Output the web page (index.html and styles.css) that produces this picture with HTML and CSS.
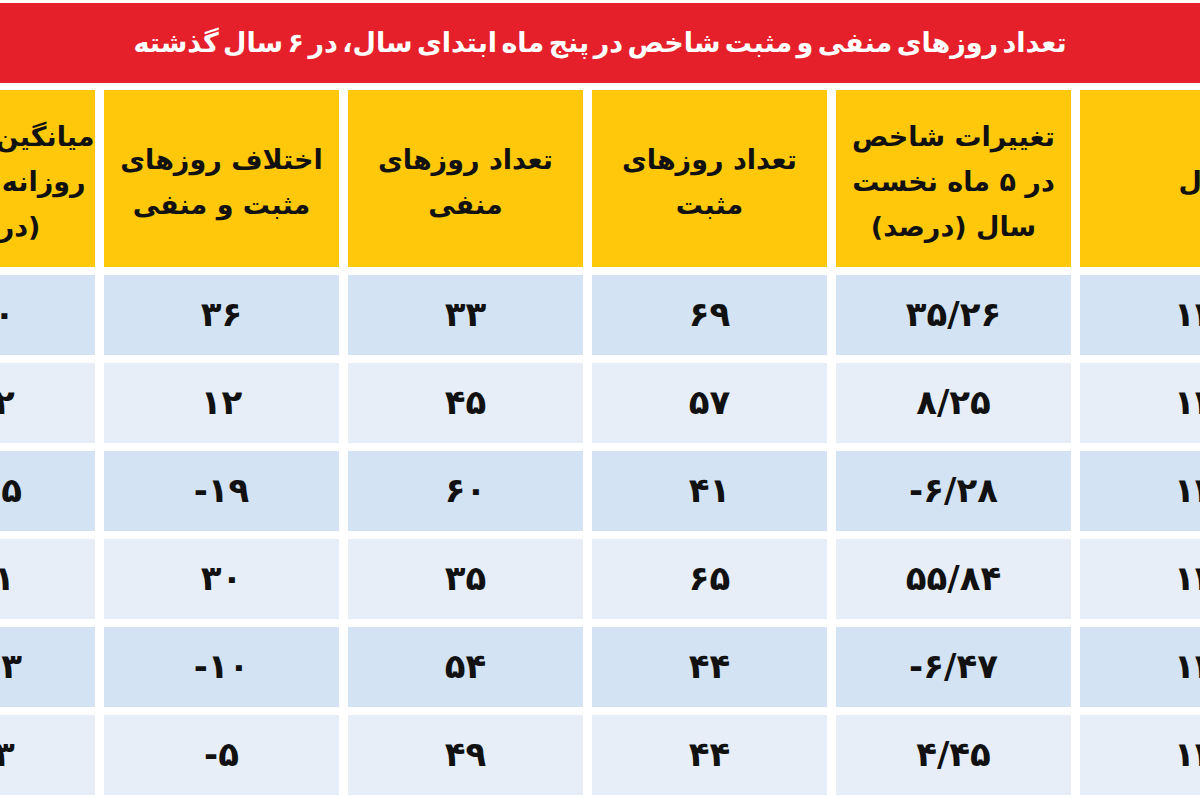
FILE: index.html
```html
<!DOCTYPE html>
<html lang="fa" dir="rtl">
<head>
<meta charset="utf-8">
<title>تعداد روزهای منفی و مثبت شاخص</title>
<link rel="stylesheet" href="styles.css">
</head>
<body>
<div class="page">
  <div class="title">تعداد روزهای منفی و مثبت شاخص در پنج ماه ابتدای سال، در ۶ سال گذشته</div>
  <div class="table">
    <div class="cell head yearhead">سال</div>
    <div class="cell head">تغییرات شاخص<br>در ۵ ماه نخست<br>سال (درصد)</div>
    <div class="cell head">تعداد روزهای<br>مثبت</div>
    <div class="cell head">تعداد روزهای<br>منفی</div>
    <div class="cell head">اختلاف روزهای<br>مثبت و منفی</div>
    <div class="cell head edge">میانگین بازدهی<br>روزانه شاخص<br>(درصد)</div>

    <div class="cell dark num year">۱۳۹۴</div>
    <div class="cell dark num">۳۵/۲۶</div>
    <div class="cell dark num">۶۹</div>
    <div class="cell dark num">۳۳</div>
    <div class="cell dark num">۳۶</div>
    <div class="cell dark num">۰/۳۰</div>

    <div class="cell light num year">۱۳۹۵</div>
    <div class="cell light num">۸/۲۵</div>
    <div class="cell light num">۵۷</div>
    <div class="cell light num">۴۵</div>
    <div class="cell light num">۱۲</div>
    <div class="cell light num">۰/۰۲</div>

    <div class="cell dark num year">۱۳۹۶</div>
    <div class="cell dark num">-۶/۲۸</div>
    <div class="cell dark num">۴۱</div>
    <div class="cell dark num">۶۰</div>
    <div class="cell dark num">-۱۹</div>
    <div class="cell dark num">-۰/۰۵</div>

    <div class="cell light num year">۱۳۹۷</div>
    <div class="cell light num">۵۵/۸۴</div>
    <div class="cell light num">۶۵</div>
    <div class="cell light num">۳۵</div>
    <div class="cell light num">۳۰</div>
    <div class="cell light num">۰/۴۱</div>

    <div class="cell dark num year">۱۳۹۸</div>
    <div class="cell dark num">-۶/۴۷</div>
    <div class="cell dark num">۴۴</div>
    <div class="cell dark num">۵۴</div>
    <div class="cell dark num">-۱۰</div>
    <div class="cell dark num">-۰/۰۳</div>

    <div class="cell light num year">۱۳۹۹</div>
    <div class="cell light num">۴/۴۵</div>
    <div class="cell light num">۴۴</div>
    <div class="cell light num">۴۹</div>
    <div class="cell light num">-۵</div>
    <div class="cell light num">۰/۰۳</div>
  </div>
</div>
</body>
</html>
```

FILE: styles.css
```css
html, body {
  margin: 0;
  padding: 0;
  background: #ffffff;
}

.page {
  width: 1200px;
  height: 800px;
  overflow: hidden;
  padding-top: 3px;
  box-sizing: border-box;
  font-family: "DejaVu Sans", "Noto Sans", sans-serif;
  font-weight: bold;
  color: #111111;
}

.title {
  height: 80px;
  background: #e5202a;
  color: #ffffff;
  font-size: 27px;
  word-spacing: -5px;
  display: flex;
  align-items: center;
  justify-content: center;
  direction: rtl;
  white-space: nowrap;
  padding-bottom: 2px;
  box-sizing: border-box;
}

.table {
  margin-top: 7px;
  width: 1455px;
  margin-right: -115px;
  display: grid;
  direction: rtl;
  grid-template-columns: repeat(6, 235px);
  grid-template-rows: 177px repeat(6, 80px);
  column-gap: 9px;
  row-gap: 8px;
}

.cell {
  display: flex;
  align-items: center;
  justify-content: center;
  text-align: center;
  box-sizing: border-box;
}

.head {
  background: #ffc80b;
  font-size: 27px;
  line-height: 45px;
  padding-top: 6px;
}

.head.edge {
  padding-left: 30px;
}

.head.yearhead {
  padding-left: 22px;
}

.dark {
  background: #d3e3f3;
}

.light {
  background: #e7eef8;
}

.num {
  direction: ltr;
  font-size: 34px;
  padding-bottom: 2px;
}

.num.year {
  padding-left: 36px;
}
```
